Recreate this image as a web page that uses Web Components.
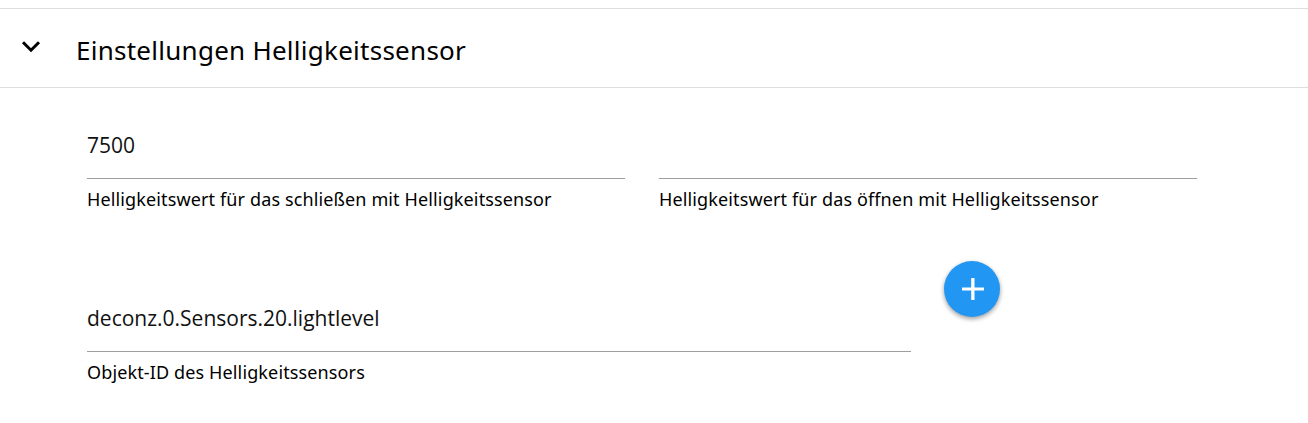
<!DOCTYPE html>
<html lang="de">
<head>
<meta charset="utf-8">
<title>Einstellungen Helligkeitssensor</title>
<style>
    body {
        margin: 0;
        height: 423px;
        overflow: hidden;
        background: #fff;
        color: #000;
        font-family: "Noto Sans", "Open Sans", sans-serif;
    }
</style>
</head>
<body>
<settings-section>
    <span slot="title">Einstellungen Helligkeitssensor</span>
    <settings-row>
        <text-field style="--width: 538px" value="7500">Helligkeitswert für das schließen mit Helligkeitssensor</text-field>
        <text-field style="--width: 538px" value="">Helligkeitswert für das öffnen mit Helligkeitssensor</text-field>
    </settings-row>
    <settings-row>
        <text-field style="--width: 824px" value="deconz.0.Sensors.20.lightlevel">Objekt-ID des Helligkeitssensors</text-field>
        <add-button></add-button>
    </settings-row>
</settings-section>

<script>
class SettingsSection extends HTMLElement {
    constructor() {
        super();

        const root = this.attachShadow({mode: 'open'});
        root.innerHTML = `
            <style>
            :host {
                display: block;
                padding-top: 8px;
            }

            .header {
                display: flex;
                align-items: center;
                box-sizing: border-box;
                height: 80px;
                padding-left: 19px;
                border-top: 1px solid #ddd;
                border-bottom: 1px solid #ddd;
            }

            svg {
                display: block;
                width: 24px;
                height: 24px;
                margin: 0 33px 3px 0;
            }

            .title {
                font-size: 26px;
                line-height: 36px;
                white-space: nowrap;
                padding-top: 4px;
                letter-spacing: .26px;
            }

            .body {
                display: flex;
                flex-direction: column;
                gap: 30px;
                padding: 32px 87px 0;
            }
            </style>
            <div class="header">
                <svg viewBox="0 0 24 24"><path d="M4 7.2l8 8 8-8" fill="none" stroke="#000" stroke-width="3"/></svg>
                <div class="title"><slot name="title"></slot></div>
            </div>
            <div class="body"><slot></slot></div>
        `;
    }
}

// One line of fields
class SettingsRow extends HTMLElement {
    constructor() {
        super();

        const root = this.attachShadow({mode: 'open'});
        root.innerHTML = `
            <style>
            :host {
                display: flex;
                align-items: flex-end;
                gap: 34px;
            }
            </style>
            <slot></slot>
        `;
    }
}

// Underlined value with its label below
class TextField extends HTMLElement {
    constructor() {
        super();

        const root = this.attachShadow({mode: 'open'});
        root.innerHTML = `
            <style>
            :host {
                display: block;
                flex: none;
                width: var(--width);
            }

            .value {
                box-sizing: border-box;
                height: 59px;
                padding-top: 9px;
                border-bottom: 1px solid #9e9e9e;
                color: #111;
                font-family: "Open Sans", sans-serif;
                font-size: 21px;
                line-height: 32px;
                white-space: nowrap;
            }

            .label {
                padding-top: 6px;
                font-size: 18px;
                line-height: 28px;
                height: 46px;
                letter-spacing: .13px;
                white-space: nowrap;
            }
            </style>
            <div class="value"></div>
            <div class="label"><slot></slot></div>
        `;
    }

    connectedCallback() {
        this.shadowRoot.querySelector('.value').textContent = this.getAttribute('value');
    }
}

// Round floating button
class AddButton extends HTMLElement {
    constructor() {
        super();

        const root = this.attachShadow({mode: 'open'});
        root.innerHTML = `
            <style>
            :host {
                display: block;
                margin-left: -1px;
                padding-bottom: 87px;
            }

            .button {
                display: flex;
                align-items: center;
                justify-content: center;
                width: 56px;
                height: 56px;
                border-radius: 50%;
                background: #2196f3;
                box-shadow: 0 2px 5px 0 rgba(0, 0, 0, .26), 0 2px 4px 0 rgba(0, 0, 0, .16);
            }

            svg {
                display: block;
                width: 22px;
                height: 22px;
                margin-left: 2px;
            }
            </style>
            <div class="button">
                <svg viewBox="0 0 22 22"><path d="M9.2 0h3.3v9.5H22v3h-9.5V22H9.2v-9.5H0v-3h9.2z" fill="#fff"/></svg>
            </div>
        `;
    }
}

// Register the elements in the CustomElementRegistry
customElements.define('settings-section', SettingsSection);
customElements.define('settings-row', SettingsRow);
customElements.define('text-field', TextField);
customElements.define('add-button', AddButton);
</script>
</body>
</html>
